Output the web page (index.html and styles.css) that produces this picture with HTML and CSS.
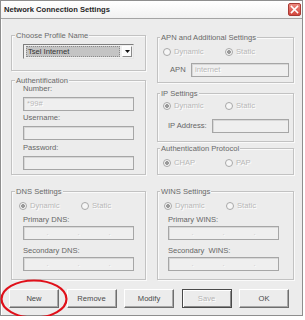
FILE: index.html
```html
<!DOCTYPE html>
<html>
<head>
<meta charset="utf-8">
<link rel="stylesheet" href="styles.css">
</head>
<body>
<div class="dialog">
  <div class="titlebar">
    <span class="title">Network Connection Settings</span>
    <span class="close"><svg width="11" height="11" viewBox="0 0 11 11"><path d="M2.5 2.5 L8.5 8.5 M8.5 2.5 L2.5 8.5" stroke="#fff" stroke-width="1.6" stroke-linecap="square"/></svg></span>
  </div>
  <div class="content">
    <div class="groups">
      <div class="col">
        <fieldset class="group g-profile">
          <legend>Choose Profile Name</legend>
          <div class="gbody">
            <div class="select">
              <span class="select-value">Tsel Internet</span>
              <span class="select-arrow"><svg width="5" height="3" viewBox="0 0 5 3"><path d="M0 0 H5 L2.5 3 Z" fill="#111"/></svg></span>
            </div>
          </div>
        </fieldset>
        <fieldset class="group g-auth">
          <legend>Authentification</legend>
          <div class="gbody">
            <div class="lbl">Number:</div>
            <div class="field">*99#</div>
            <div class="lbl">Username:</div>
            <div class="field"></div>
            <div class="lbl">Password:</div>
            <div class="field"></div>
          </div>
        </fieldset>
      </div>
      <div class="col col-right">
        <fieldset class="group g-apn">
          <legend>APN and Additional Settings</legend>
          <div class="gbody">
            <div class="radios">
              <span class="opt"><span class="radio"></span>Dynamic</span>
              <span class="opt"><span class="radio on"></span>Static</span>
            </div>
            <div class="row">
              <span class="lbl">APN</span>
              <div class="field field-apn">internet</div>
            </div>
          </div>
        </fieldset>
        <fieldset class="group g-ip">
          <legend>IP Settings</legend>
          <div class="gbody">
            <div class="radios">
              <span class="opt"><span class="radio on"></span>Dynamic</span>
              <span class="opt"><span class="radio"></span>Static</span>
            </div>
            <div class="row">
              <span class="lbl">IP Address:</span>
              <div class="field field-ip"></div>
            </div>
          </div>
        </fieldset>
        <fieldset class="group g-prot">
          <legend>Authentication Protocol</legend>
          <div class="gbody">
            <div class="radios">
              <span class="opt"><span class="radio on"></span>CHAP</span>
              <span class="opt"><span class="radio"></span>PAP</span>
            </div>
          </div>
        </fieldset>
      </div>
      <fieldset class="group g-dns">
        <legend>DNS Settings</legend>
        <div class="gbody">
          <div class="radios">
            <span class="opt"><span class="radio on"></span>Dynamic</span>
            <span class="opt"><span class="radio"></span>Static</span>
          </div>
          <div class="lbl">Primary DNS:</div>
          <div class="field ipfield"><i>.</i><i>.</i><i>.</i></div>
          <div class="lbl">Secondary DNS:</div>
          <div class="field ipfield"><i>.</i><i>.</i><i>.</i></div>
        </div>
      </fieldset>
      <fieldset class="group g-wins">
        <legend>WINS Settings</legend>
        <div class="gbody">
          <div class="radios">
            <span class="opt"><span class="radio on"></span>Dynamic</span>
            <span class="opt"><span class="radio"></span>Static</span>
          </div>
          <div class="lbl">Primary WINS:</div>
          <div class="field ipfield"><i>.</i><i>.</i><i>.</i></div>
          <div class="lbl">Secondary &nbsp;WINS:</div>
          <div class="field ipfield"><i>.</i><i>.</i><i>.</i></div>
        </div>
      </fieldset>
    </div>
    <div class="buttons">
      <span class="btn">New</span>
      <span class="btn">Remove</span>
      <span class="btn">Modify</span>
      <span class="btn btn-default btn-disabled">Save</span>
      <span class="btn">OK</span>
    </div>
  </div>
  <svg class="mark" width="70" height="42" viewBox="0 0 70 42"><ellipse cx="34" cy="20" rx="32.5" ry="18.5" fill="none" stroke="#e0101a" stroke-width="2.2"/></svg>
</div>
</body>
</html>
```
FILE: styles.css
```css
* { box-sizing: border-box; }

body {
  margin: 0;
  background: #ffffff;
  font-family: "Liberation Sans", Arial, sans-serif;
  font-size: 7.6px;
  color: #666666;
}

.dialog {
  position: relative;
  width: 303px;
  height: 316px;
  border: 1px solid #8e8e8e;
  background: #ececec;
  display: flex;
  flex-direction: column;
}

.titlebar {
  height: 18px;
  flex: none;
  border-bottom: 1px solid #a4a4a4;
  background: linear-gradient(#ffffff, #f1f1f1);
  display: flex;
  align-items: flex-start;
  justify-content: space-between;
  padding-left: 3px;
}

.title {
  line-height: 17px;
  font-weight: bold;
  color: #262626;
}

.close {
  margin-top: 2px;
  margin-right: 1px;
  width: 13px;
  height: 13px;
  border: 1px solid #a83a34;
  border-radius: 2px;
  background: linear-gradient(#ec8a80, #d3463d);
  display: flex;
  align-items: center;
  justify-content: center;
}

.content {
  flex: 1;
  padding: 12px 8px 0 10px;
  box-shadow: inset 1px 0 0 #ffffff;
}

.groups {
  display: grid;
  grid-template-columns: 135px 137px;
  column-gap: 11px;
  row-gap: 12px;
}

.col {
  display: flex;
  flex-direction: column;
}

.col-right { padding-top: 2px; }

.group {
  margin: 0;
  padding: 0;
  min-width: 0;
  border: 1px solid #c2c2c2;
  box-shadow: inset 1px 1px 0 #fafafa, 1px 1px 0 #fafafa;
}

.group legend {
  padding: 0 1px;
  margin-left: 3px;
  height: 9px;
  line-height: 9px;
  color: #6a6a6a;
  background: #ececec;
}

.col-right .group legend,
.g-wins legend { margin-left: 2px; }

.gbody {
  display: flex;
  flex-direction: column;
}

.lbl {
  height: 8px;
  line-height: 8px;
  color: #666666;
  white-space: nowrap;
}

.field {
  height: 14px;
  border: 1px solid #a6a6a6;
  background: #efefef;
  box-shadow: inset 1px 1px 0 #d8d8d8;
  color: #b8b8b8;
  line-height: 12px;
  padding-left: 3px;
  text-shadow: 1px 1px 0 #ffffff;
  white-space: nowrap;
}

/* profile */
.g-profile .gbody { padding: 4px 0 11px 11px; }

.select {
  width: 111px;
  height: 15px;
  border: 1px solid;
  border-color: #7e7e7e #e6e6e6 #e6e6e6 #7e7e7e;
  background: #efefef;
  display: flex;
  align-items: center;
  padding: 1px 1px 1px 2px;
}

.select-value {
  flex: 1;
  height: 11px;
  line-height: 10px;
  background: #c4c4c4;
  border: 1px dotted #8a8a8a;
  color: #333333;
  padding-left: 1px;
  margin-right: 2px;
}

.select-arrow {
  width: 10px;
  height: 11px;
  background: #fbfbfb;
  border: 1px solid;
  border-color: #ffffff #8a8a8a #8a8a8a #ffffff;
  display: flex;
  align-items: center;
  justify-content: center;
}

/* authentification */
.g-auth { margin-top: 5px; }
.g-auth .gbody { padding: 0 0 4px 11px; }
.g-auth .field { width: 111px; margin-top: 4px; }
.g-auth .lbl { margin-top: 4px; }
.g-auth .lbl:first-child { margin-top: 0; }
.g-auth .field + .lbl { margin-top: 3px; }
.g-auth .field + .lbl ~ .lbl { margin-top: 4px; }

/* radios */
.radios {
  height: 10px;
  display: grid;
  grid-template-columns: 62px auto;
  align-items: center;
}

.opt {
  display: flex;
  align-items: center;
  gap: 3px;
  color: #b8b8b8;
  text-shadow: 1px 1px 0 #ffffff;
  line-height: 10px;
}

.radio {
  width: 8px;
  height: 8px;
  border-radius: 50%;
  border: 1px solid #a8a8a8;
  background: #f6f6f6;
  flex: none;
}

.radio.on {
  background: radial-gradient(circle, #9a9a9a 0 1.6px, #f6f6f6 2.2px);
}

.row {
  display: flex;
  align-items: center;
  height: 14px;
}

/* apn */
.g-apn .gbody { padding: 5px 0 5px 5px; }
.g-apn .row { margin-top: 6px; }
.g-apn .row .lbl { margin-left: 7px; width: 21px; }
.field-apn { width: 98px; }

/* ip */
.g-ip { margin-top: 6px; }
.g-ip .gbody { padding: 3px 0 8px 5px; }
.g-ip .row { margin-top: 8px; }
.g-ip .row .lbl { margin-left: 5px; width: 44px; }
.field-ip { width: 77px; }

/* protocol */
.g-prot { margin-top: 2px; }
.g-prot .gbody { padding: 5px 0 6px 5px; }

/* dns / wins */
.g-dns .gbody { padding: 5px 0 8px 7px; }
.g-wins .gbody { padding: 5px 0 8px 6px; }
.g-dns .lbl { margin-left: 4px; margin-top: 5px; }
.g-wins .lbl { margin-left: 4px; margin-top: 5px; }
.g-dns .field, .g-wins .field { margin-left: 4px; width: 111px; margin-top: 2px; }
.g-dns .field + .lbl, .g-wins .field + .lbl { margin-top: 7px; }

.ipfield {
  display: flex;
  justify-content: space-around;
  padding: 0 8px;
}

.ipfield i {
  font-style: normal;
  color: #cccccc;
  line-height: 12px;
}

/* buttons */
.buttons {
  margin-top: 9px;
  margin-left: -2px;
  display: flex;
  gap: 7.5px;
}

.btn {
  width: 50px;
  height: 19px;
  border: 1px solid;
  border-color: #ffffff #6e6e6e #6e6e6e #ffffff;
  box-shadow: inset -1px -1px 0 #a8a8a8;
  background: #ececec;
  color: #4a4a4a;
  display: flex;
  align-items: center;
  justify-content: center;
}

.btn-default {
  border-color: #4a4a4a;
  box-shadow: inset 1px 1px 0 #ffffff, inset -1px -1px 0 #8a8a8a;
}

.btn-disabled {
  color: #b4b4b4;
  text-shadow: 1px 1px 0 #ffffff;
}

.mark {
  position: absolute;
  left: -1px;
  top: 278px;
}
```
